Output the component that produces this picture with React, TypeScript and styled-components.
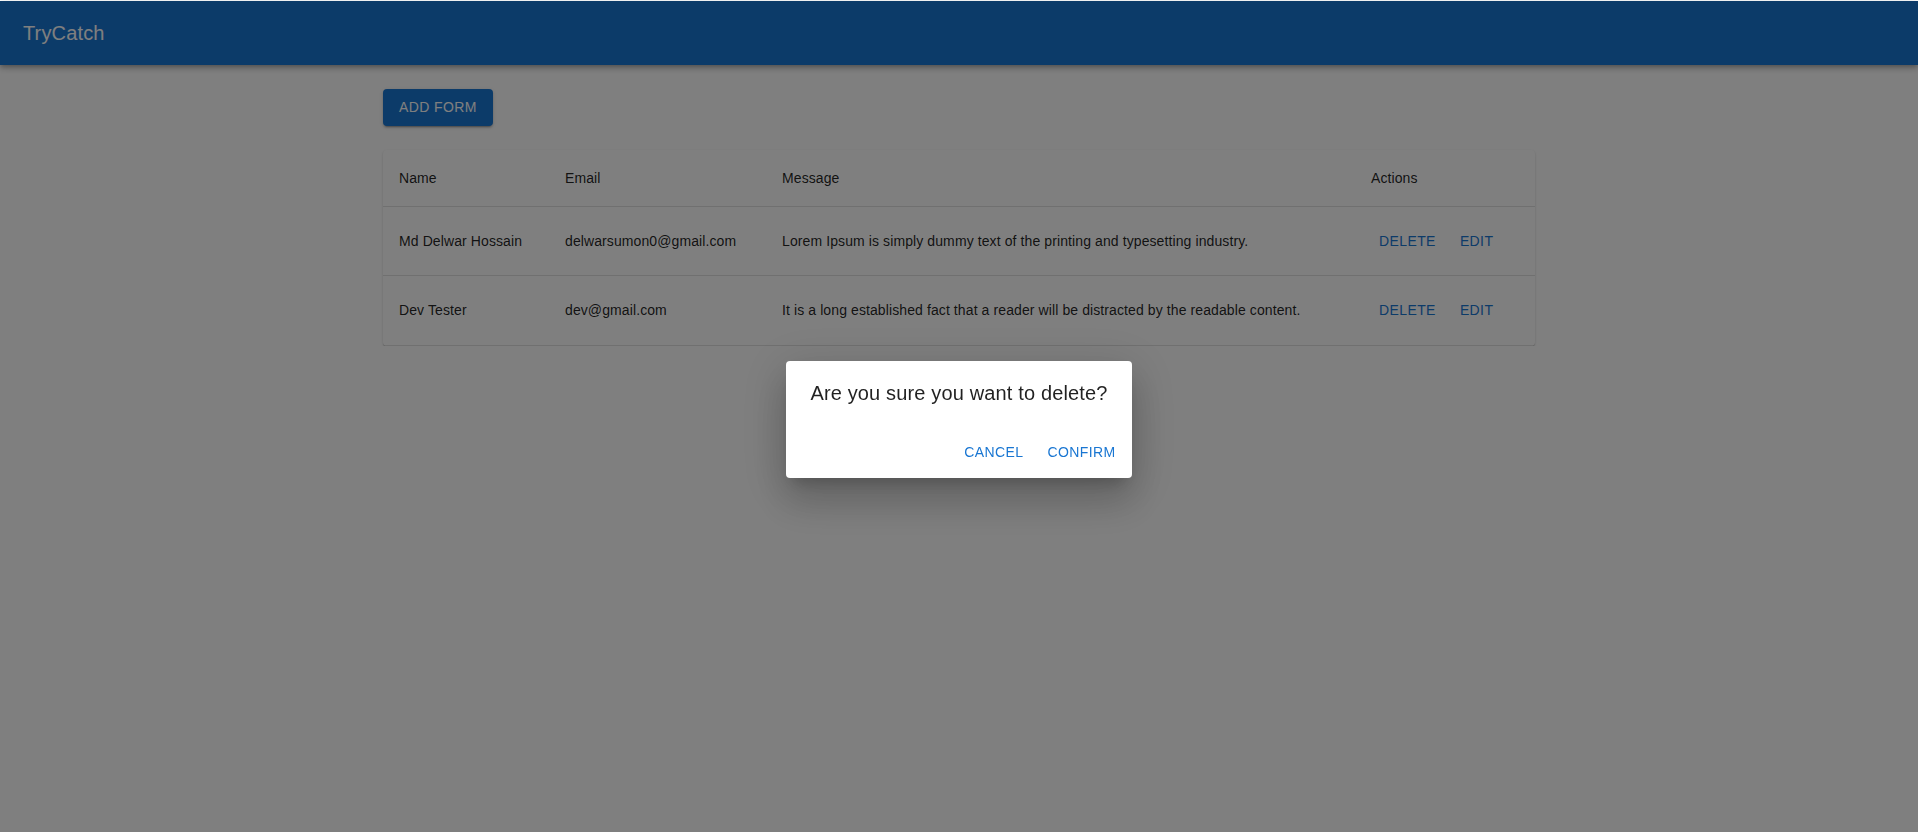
import React from "react";
import styled, { createGlobalStyle } from "styled-components";

interface Entry {
  name: string;
  email: string;
  message: string;
}

const entries: Entry[] = [
  {
    name: "Md Delwar Hossain",
    email: "delwarsumon0@gmail.com",
    message: "Lorem Ipsum is simply dummy text of the printing and typesetting industry.",
  },
  {
    name: "Dev Tester",
    email: "dev@gmail.com",
    message: "It is a long established fact that a reader will be distracted by the readable content.",
  },
];

const App = () => {
  return (
    <>
      <GlobalStyle />
      <AppBar>
        <Toolbar>
          <Brand>TryCatch</Brand>
        </Toolbar>
      </AppBar>

      <Container>
        <ContainedButton type="button">Add Form</ContainedButton>

        <TablePaper>
          <Table>
            <colgroup>
              <col style={{ width: 166 }} />
              <col style={{ width: 217 }} />
              <col style={{ width: 589 }} />
              <col style={{ width: 180 }} />
            </colgroup>
            <thead>
              <tr>
                <HeadCell>Name</HeadCell>
                <HeadCell>Email</HeadCell>
                <HeadCell>Message</HeadCell>
                <HeadCell>Actions</HeadCell>
              </tr>
            </thead>
            <tbody>
              {entries.map((entry) => (
                <tr key={entry.email}>
                  <BodyCell>{entry.name}</BodyCell>
                  <BodyCell>{entry.email}</BodyCell>
                  <BodyCell>{entry.message}</BodyCell>
                  <BodyCell>
                    <Actions>
                      <TextButton type="button">Delete</TextButton>
                      <TextButton type="button">Edit</TextButton>
                    </Actions>
                  </BodyCell>
                </tr>
              ))}
            </tbody>
          </Table>
        </TablePaper>
      </Container>

      <Backdrop>
        <DialogPaper role="dialog">
          <DialogTitle>Are you sure you want to delete?</DialogTitle>
          <DialogActions>
            <TextButton type="button">Cancel</TextButton>
            <TextButton type="button">Confirm</TextButton>
          </DialogActions>
        </DialogPaper>
      </Backdrop>
    </>
  );
};

export default App;

const GlobalStyle = createGlobalStyle`
  * {
    box-sizing: border-box;
  }
  html, body {
    margin: 0;
    padding: 0;
    background: #ffffff;
    min-height: 100%;
  }
  body {
    font-family: "Liberation Sans", Arial, Helvetica, sans-serif;
    color: rgba(0, 0, 0, 0.87);
    padding-top: 1px;
  }
`;

const AppBar = styled.header`
  width: 100%;
  background: #1976d2;
  color: #ffffff;
  box-shadow: 0px 2px 4px -1px rgba(0, 0, 0, 0.2), 0px 4px 5px 0px rgba(0, 0, 0, 0.14),
    0px 1px 10px 0px rgba(0, 0, 0, 0.12);
`;

const Toolbar = styled.div`
  display: flex;
  align-items: center;
  min-height: 64px;
  padding: 0 23px;
`;

const Brand = styled.h6`
  margin: 0;
  font-size: 20px;
  font-weight: 500;
  line-height: 1.6;
  letter-spacing: 0.0075em;
`;

const Container = styled.main`
  width: 100%;
  max-width: 1200px;
  margin: 0 auto;
  padding: 24px 24px 0;
  display: flex;
  flex-direction: column;
  align-items: flex-start;
  gap: 24px;
`;

const ContainedButton = styled.button`
  all: unset;
  box-sizing: border-box;
  height: 36.5px;
  padding: 6px 16px;
  display: inline-flex;
  align-items: center;
  background: #1976d2;
  color: #ffffff;
  border-radius: 4px;
  font-size: 14px;
  font-weight: 500;
  letter-spacing: 0.4px;
  text-transform: uppercase;
  box-shadow: 0px 3px 1px -2px rgba(0, 0, 0, 0.2), 0px 2px 2px 0px rgba(0, 0, 0, 0.14),
    0px 1px 5px 0px rgba(0, 0, 0, 0.12);
  cursor: pointer;
`;

const TablePaper = styled.section`
  width: 100%;
  background: #ffffff;
  border-radius: 4px;
  overflow: hidden;
  box-shadow: 0px 2px 1px -1px rgba(0, 0, 0, 0.2), 0px 1px 1px 0px rgba(0, 0, 0, 0.14),
    0px 1px 3px 0px rgba(0, 0, 0, 0.12);
`;

const Table = styled.table`
  width: 100%;
  border-collapse: collapse;
  table-layout: fixed;
  font-size: 14px;
  letter-spacing: 0.1px;
`;

const HeadCell = styled.th`
  text-align: left;
  font-weight: 500;
  line-height: 24px;
  padding: 16px;
  border-bottom: 1px solid rgb(224, 224, 224);
  color: rgba(0, 0, 0, 0.87);
`;

const BodyCell = styled.td`
  line-height: 20px;
  padding: 16px;
  height: 69px;
  border-bottom: 1px solid rgb(224, 224, 224);
  color: rgba(0, 0, 0, 0.87);
  white-space: nowrap;
`;

const Actions = styled.div`
  display: flex;
  gap: 8px;
`;

const TextButton = styled.button`
  all: unset;
  box-sizing: border-box;
  height: 36.5px;
  padding: 6px 8px;
  display: inline-flex;
  align-items: center;
  color: #1976d2;
  font-size: 14px;
  font-weight: 500;
  letter-spacing: 0.4px;
  text-transform: uppercase;
  border-radius: 4px;
  cursor: pointer;
`;

const Backdrop = styled.div`
  position: fixed;
  top: 1px;
  left: 0;
  right: 0;
  bottom: 0;
  background: rgba(0, 0, 0, 0.5);
  display: flex;
  align-items: center;
  justify-content: center;
  padding-top: 6px;
`;

const DialogPaper = styled.div`
  background: #ffffff;
  border-radius: 4px;
  margin: 32px;
  box-shadow: 0px 11px 15px -7px rgba(0, 0, 0, 0.2), 0px 24px 38px 3px rgba(0, 0, 0, 0.14),
    0px 9px 46px 8px rgba(0, 0, 0, 0.12);
  display: flex;
  flex-direction: column;
`;

const DialogTitle = styled.h2`
  margin: 0;
  padding: 16px 24px;
  font-size: 20px;
  font-weight: 500;
  line-height: 1.6;
  letter-spacing: 0.0075em;
  color: rgba(0, 0, 0, 0.87);
`;

const DialogActions = styled.div`
  display: flex;
  justify-content: flex-end;
  align-items: center;
  gap: 8px;
  padding: 8px;
`;
